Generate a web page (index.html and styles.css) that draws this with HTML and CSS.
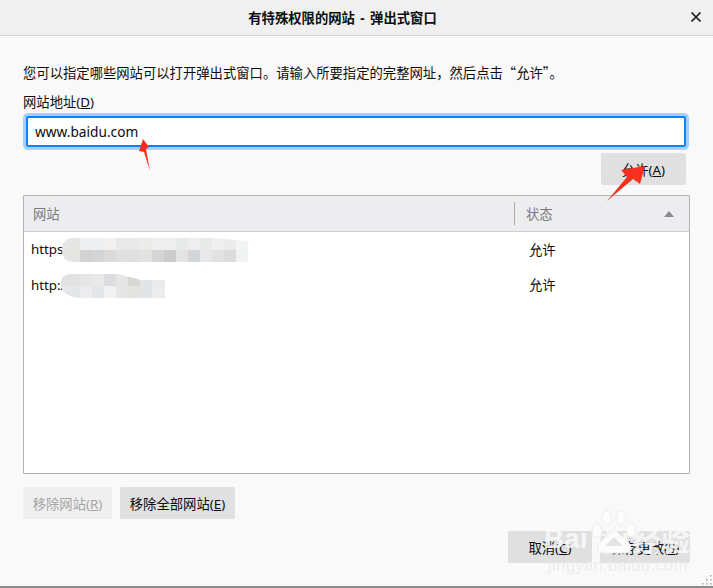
FILE: index.html
```html
<!DOCTYPE html>
<html lang="zh">
<head>
<meta charset="utf-8">
<title>有特殊权限的网站 - 弹出式窗口</title>
<link rel="stylesheet" href="styles.css">
</head>
<body>
<div class="dialog">
  <header class="titlebar">
    <h1 class="title">有特殊权限的网站 - 弹出式窗口</h1>
    <svg class="close" width="12" height="12" viewBox="0 0 12 12"><path d="M1.5 1.5 10.5 10.5M10.5 1.5 1.5 10.5" stroke="#1b1b1c" stroke-width="1.7" fill="none"/></svg>
  </header>
  <main class="content">
    <p class="intro">您可以指定哪些网站可以打开弹出式窗口。请输入所要指定的完整网址，然后点击“允许”。</p>
    <label class="field-label">网站地址(<u>D</u>)</label>
    <div class="url-input">www.baidu.com</div>
    <div class="allow-row"><button class="btn btn-allow">允许(<u>A</u>)</button></div>
    <section class="table">
      <div class="thead">
        <div class="th-site">网站</div>
        <div class="th-status">状态<svg class="sort" width="10" height="6" viewBox="0 0 10 6"><path d="M5 0 10 6H0z" fill="#8a8a8c"/></svg></div>
      </div>
      <div class="row"><span class="site">https</span><span class="status">允许</span></div>
      <div class="row"><span class="site">http:/</span><span class="status">允许</span></div>
    </section>
    <div class="btn-row">
      <button class="btn btn-disabled">移除网站(<u>R</u>)</button>
      <button class="btn btn-all">移除全部网站(<u>E</u>)</button>
    </div>
    <div class="footer-row">
      <button class="btn btn-cancel">取消(<u>C</u>)</button>
      <button class="btn btn-save">保存更改(<u>S</u>)</button>
    </div>
  </main>

  <svg class="mosaic mosaic-one" width="186" height="24" viewBox="0 0 186 24">
    <defs><clipPath id="m1"><path d="M12 0H150L186 3V24H12Q0 24 0 12Q0 0 12 0Z"/></clipPath></defs>
    <g clip-path="url(#m1)">
      <rect x="0" y="0" width="18" height="12" fill="#e6e6e5"/><rect x="18" y="0" width="12" height="12" fill="#eeeff0"/><rect x="30" y="0" width="12" height="12" fill="#eeeff0"/><rect x="42" y="0" width="12" height="12" fill="#f2f1f0"/><rect x="54" y="0" width="12" height="12" fill="#e9e9ea"/><rect x="66" y="0" width="12" height="12" fill="#e9e9e9"/><rect x="78" y="0" width="12" height="12" fill="#ebebea"/><rect x="90" y="0" width="12" height="12" fill="#eeeeef"/><rect x="102" y="0" width="12" height="12" fill="#eeeeee"/><rect x="114" y="0" width="12" height="12" fill="#e8e9e9"/><rect x="126" y="0" width="12" height="12" fill="#eeeeef"/><rect x="138" y="0" width="12" height="12" fill="#e8e9e9"/><rect x="150" y="0" width="12" height="12" fill="#efefef"/><rect x="162" y="0" width="12" height="12" fill="#ebebeb"/><rect x="174" y="0" width="12" height="12" fill="#f3f4f5"/>
      <rect x="0" y="12" width="18" height="12" fill="#e4e4e3"/><rect x="18" y="12" width="12" height="12" fill="#d2d2d2"/><rect x="30" y="12" width="12" height="12" fill="#d3d4d6"/><rect x="42" y="12" width="12" height="12" fill="#dcdbd9"/><rect x="54" y="12" width="12" height="12" fill="#dfe0e2"/><rect x="66" y="12" width="12" height="12" fill="#dfdfdf"/><rect x="78" y="12" width="12" height="12" fill="#e2e2e1"/><rect x="90" y="12" width="12" height="12" fill="#d4d5d7"/><rect x="102" y="12" width="12" height="12" fill="#cbccce"/><rect x="114" y="12" width="12" height="12" fill="#e5e3e1"/><rect x="126" y="12" width="12" height="12" fill="#d3d7da"/><rect x="138" y="12" width="12" height="12" fill="#e8e8e7"/><rect x="150" y="12" width="12" height="12" fill="#e1e1e1"/><rect x="162" y="12" width="12" height="12" fill="#dcdcdc"/><rect x="174" y="12" width="12" height="12" fill="#f1f2f2"/>
    </g>
  </svg>
  <svg class="mosaic mosaic-two" width="104" height="24" viewBox="0 0 104 24">
    <defs><clipPath id="m2"><path d="M10 0H57L80 6H104V24H18Q0 22 0 10Q0 0 10 0Z"/></clipPath></defs>
    <g clip-path="url(#m2)">
      <rect x="0" y="0" width="19" height="12" fill="#e2e2e2"/><rect x="19" y="0" width="12" height="12" fill="#e6e6e5"/><rect x="31" y="0" width="12" height="12" fill="#e9e9e9"/><rect x="43" y="0" width="12" height="12" fill="#dcdde1"/><rect x="55" y="0" width="12" height="12" fill="#e7e6e7"/><rect x="67" y="0" width="12" height="12" fill="#d9d6d6"/><rect x="79" y="0" width="12" height="12" fill="#e2e4e6"/><rect x="91" y="0" width="13" height="12" fill="#ebebeb"/>
      <rect x="0" y="12" width="19" height="12" fill="#e5e6e9"/><rect x="19" y="12" width="12" height="12" fill="#ececee"/><rect x="31" y="12" width="12" height="12" fill="#e4e6e8"/><rect x="43" y="12" width="12" height="12" fill="#f2f2f2"/><rect x="55" y="12" width="12" height="12" fill="#e6e6e6"/><rect x="67" y="12" width="12" height="12" fill="#e3e3e2"/><rect x="79" y="12" width="12" height="12" fill="#e2e4e6"/><rect x="91" y="12" width="13" height="12" fill="#ededed"/>
    </g>
  </svg>

  <svg class="arrow" width="713" height="588" viewBox="0 0 713 588">
    <path d="M143 139 149 147 146 149 150 171 144 152 139 151Z" fill="#f5301f"/>
    <path d="M645 166 640 184 633 179 607 201 627 177 621 170Z" fill="#f5301f"/>
  </svg>

  <div class="watermark">
    <span class="wm-bai">Bai</span><span class="wm-du">du</span><span class="wm-jy">经验</span>
    <span class="wm-url">jingyan.baidu.com</span>
    <svg class="wm-paw" width="50" height="46" viewBox="0 0 50 46">
      <g fill="#fcfcfc" stroke="#ededed" stroke-width="1">
        <ellipse cx="7" cy="21" rx="5" ry="7"/><ellipse cx="17" cy="8" rx="5" ry="7"/><ellipse cx="31" cy="8" rx="5" ry="7"/><ellipse cx="41" cy="20" rx="5" ry="7"/>
        <path d="M24 19 39 33Q44 43 34 43H14Q4 43 9 33Z"/>
      </g>
      <path d="M24 27 33 36H15Z" fill="#e4e4e4"/>
    </svg>
  </div>

  <svg class="grip" width="12" height="12" viewBox="0 0 12 12"><g fill="#a9a9a9"><rect x="9" y="1" width="1.5" height="1.5"/><rect x="5" y="5" width="1.5" height="1.5"/><rect x="9" y="5" width="1.5" height="1.5"/><rect x="1" y="9" width="1.5" height="1.5"/><rect x="5" y="9" width="1.5" height="1.5"/><rect x="9" y="9" width="1.5" height="1.5"/></g></svg>
</div>
</body>
</html>
```
FILE: styles.css
```css
* { box-sizing: border-box; }
html, body { margin: 0; padding: 0; }
body {
  width: 713px;
  height: 588px;
  overflow: hidden;
  font-family: "Noto Sans", "Noto Sans CJK SC", sans-serif;
  font-size: 13.33px;
  color: #0c0c0d;
}
.dialog {
  position: relative;
  width: 713px;
  height: 588px;
  display: flex;
  flex-direction: column;
  background: #f9f9f9;
  border-bottom: 2px solid #8c8c8c;
}
.titlebar {
  height: 36px;
  flex: none;
  display: flex;
  align-items: center;
  justify-content: center;
  padding-right: 28px;
  position: relative;
  background: #f0f0f0;
  border-bottom: 1px solid #d7d7d7;
}
.title {
  margin: 0;
  font-size: 13.33px;
  font-weight: 700;
  line-height: 20px;
  word-spacing: 2px;
  font-family: "Noto Sans", "Noto Sans CJK SC", sans-serif;
}
.close { position: absolute; right: 11px; top: 11px; }
.content {
  display: flex;
  flex-direction: column;
  padding: 27px 23px 0;
}
.intro {
  margin: 0;
  line-height: 20px;
  height: 20px;
  white-space: nowrap;
  font-family: "Noto Sans CJK SC", sans-serif;
}
.field-label { margin-top: 10px; line-height: 18px; height: 18px; display: block; }
.url-input {
  margin: 5px 4px 0 3px;
  height: 31px;
  background: #fff;
  border: 2px solid #0a84ff;
  border-radius: 2px;
  box-shadow: 0 0 0 3px #a6d0fb;
  padding-left: 7px;
  line-height: 27px;
  font-size: 13.7px;
  color: #0c0c0d;
}
.btn {
  display: block;
  height: 32px;
  border: 0;
  border-radius: 2px;
  padding: 0;
  font: inherit;
  color: #0c0c0d;
  background: #e0e0e1;
}
.allow-row { display: flex; justify-content: flex-end; margin: 6px 4px 0 0; }
.btn-allow { width: 85px; }
.table {
  margin-top: 10px;
  height: 279px;
  border: 1px solid #b1b1b1;
  border-radius: 1px;
  background: #fff;
}
.thead {
  height: 36px;
  display: flex;
  align-items: center;
  background: #ededf0;
  border-bottom: 1px solid #cfcfd1;
  color: #7b7b7c;
}
.th-site { width: 490px; padding-left: 9px; }
.th-status {
  flex: 1;
  height: 23px;
  display: flex;
  align-items: center;
  justify-content: space-between;
  padding: 0 15px 0 11px;
  border-left: 1px solid #a8a8a8;
}
.row { height: 35px; display: flex; align-items: center; padding-bottom: 2px; }
.thead + .row { height: 36px; }
.site { width: 505px; padding-left: 7px; }
.status { flex: none; }
.btn-row { display: flex; gap: 8px; margin-top: 13px; }
.btn-disabled { width: 89px; background: #efefef; color: #a6a6a7; }
.btn-all { width: 115px; }
.footer-row { display: flex; justify-content: flex-end; gap: 8px; margin-top: 12px; }
.btn-cancel { width: 84px; }
.btn-save { width: 90px; }
.mosaic { position: absolute; }
.mosaic-one { left: 62px; top: 238px; }
.mosaic-two { left: 61px; top: 274px; }
.arrow { position: absolute; left: 0; top: 0; pointer-events: none; }
.watermark {
  position: absolute;
  left: 540px;
  top: 508px;
  width: 165px;
  height: 66px;
  pointer-events: none;
  font-family: "Liberation Sans", "Noto Sans CJK SC", sans-serif;
  color: rgba(251, 251, 251, 0.82);
}
.watermark span { position: absolute; white-space: nowrap; }
.wm-bai { left: 4px; top: 14px; font-size: 28px; line-height: 34px; font-weight: 700; }
.wm-du { left: 55px; top: 14px; font-size: 28px; line-height: 34px; font-weight: 700; }
.wm-jy { left: 92px; top: 19px; font-size: 29px; line-height: 30px; font-weight: 700; }
.wm-url { left: 8px; top: 48px; font-size: 16.5px; line-height: 18px; letter-spacing: 0.4px; color: rgba(236, 236, 236, 0.95); }
.wm-paw { position: absolute; left: 50px; top: 2px; }
.grip { position: absolute; right: 0; bottom: 0; }
```
